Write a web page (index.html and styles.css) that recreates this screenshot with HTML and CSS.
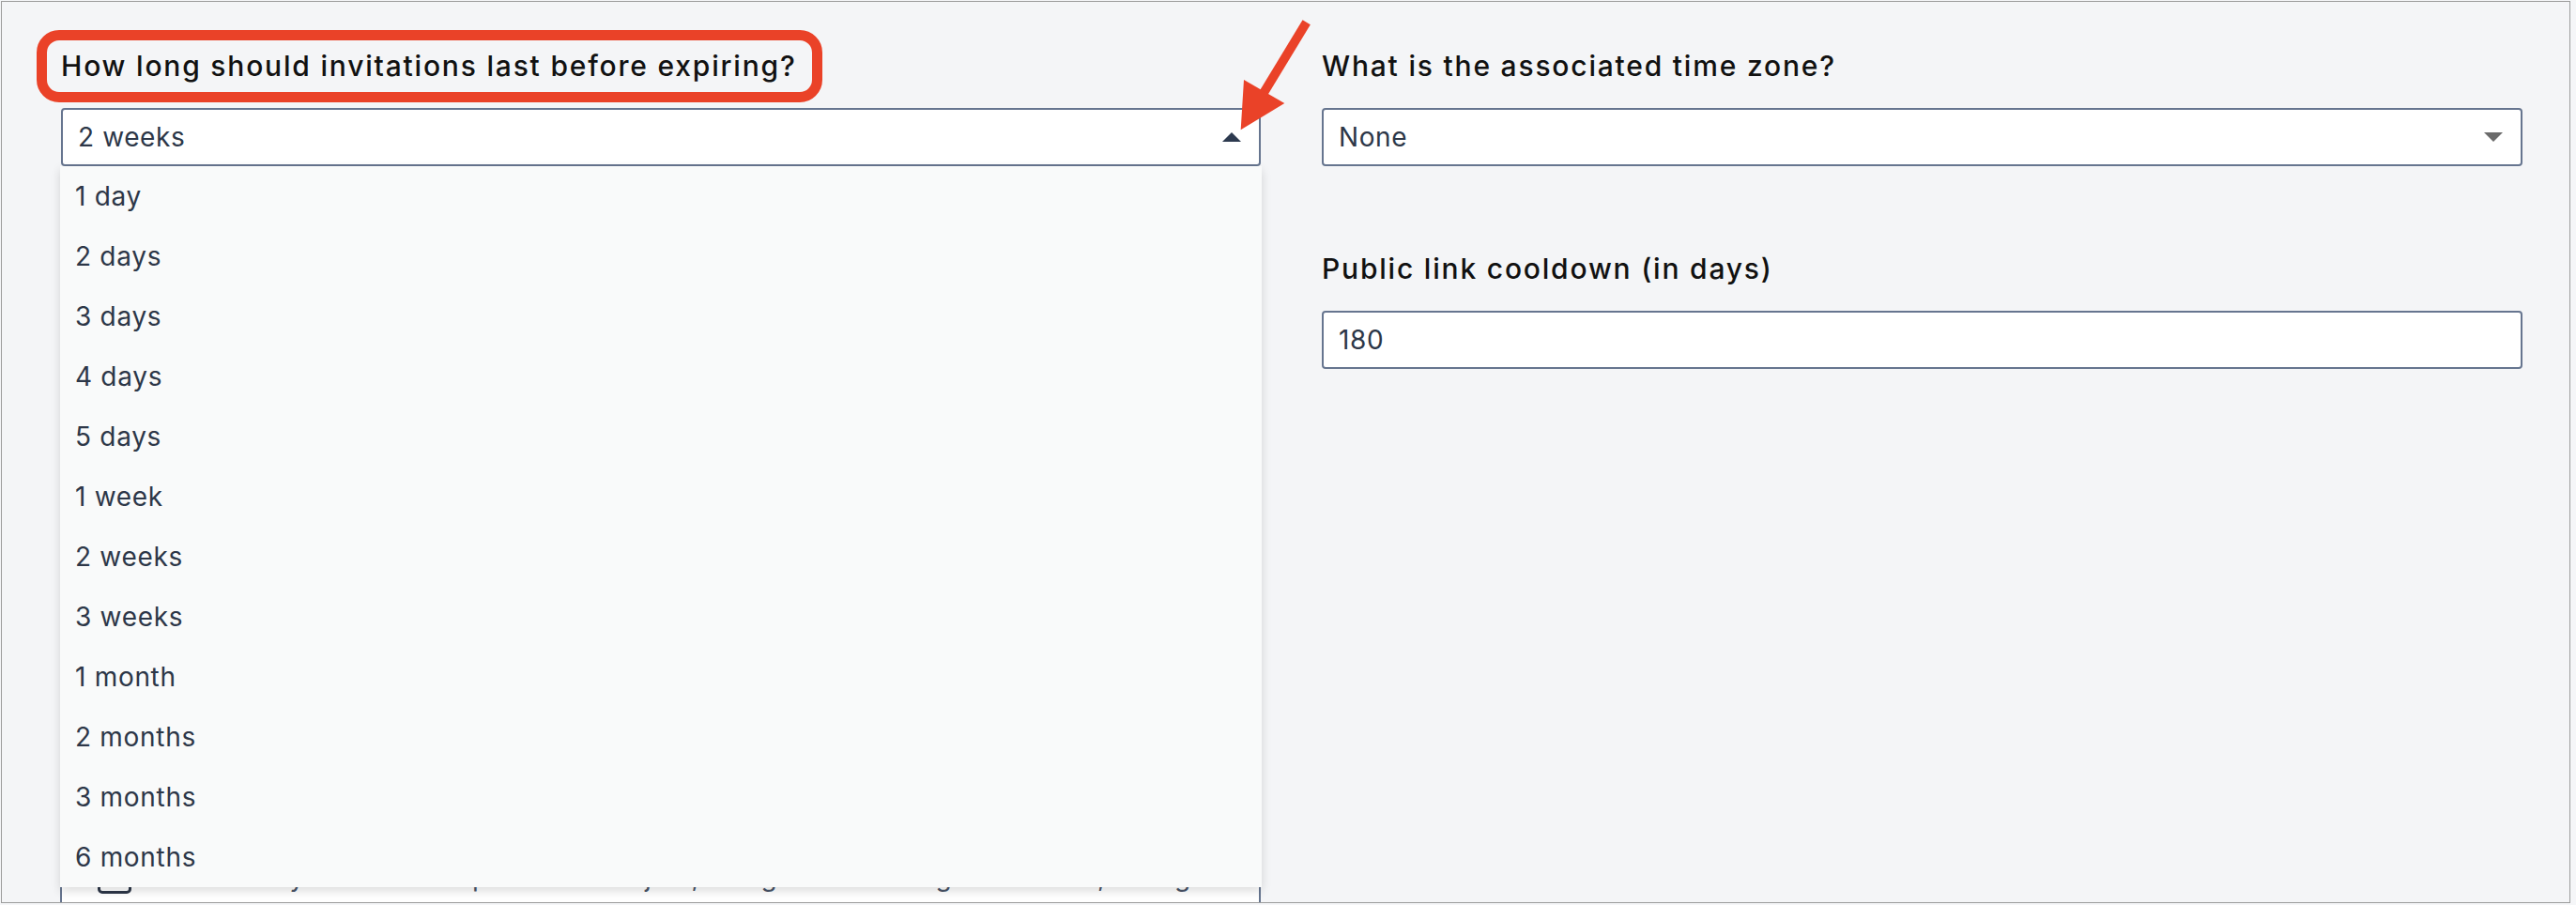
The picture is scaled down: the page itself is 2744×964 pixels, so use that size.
FILE: index.html
```html
<!DOCTYPE html>
<html lang="en">
<head>
<meta charset="utf-8">
<title>Invitation settings</title>
<link rel="stylesheet" href="styles.css">
</head>
<body>
<div class="frame">
  <div class="grid">
    <div class="col">
      <div class="field">
        <label class="label">How long should invitations last before expiring?</label>
        <div class="select-wrap">
          <div class="select">
            <span class="value">2 weeks</span>
            <span class="caret caret-up"></span>
          </div>
          <ul class="menu">
            <li class="item">1 day</li>
            <li class="item">2 days</li>
            <li class="item">3 days</li>
            <li class="item">4 days</li>
            <li class="item">5 days</li>
            <li class="item">1 week</li>
            <li class="item">2 weeks</li>
            <li class="item">3 weeks</li>
            <li class="item">1 month</li>
            <li class="item">2 months</li>
            <li class="item">3 months</li>
            <li class="item">6 months</li>
          </ul>
        </div>
      </div>
      <div class="option-box">
        <div class="option-row">
          <span class="checkbox"></span>
          <span class="option-text">Allow anyone with the public link to join, using their own sign-in details, as a guest</span>
        </div>
      </div>
    </div>
    <div class="col">
      <div class="field">
        <label class="label">What is the associated time zone?</label>
        <div class="select">
          <span class="value">None</span>
          <span class="caret caret-down"></span>
        </div>
      </div>
      <div class="field field-spaced">
        <label class="label">Public link cooldown (in days)</label>
        <div class="input"><span class="value">180</span></div>
      </div>
    </div>
  </div>
</div>
<div class="annot-box"></div>
<svg class="annot-arrow" width="2744" height="964" viewBox="0 0 2744 964">
  <line x1="1391.7" y1="23.8" x2="1343" y2="104" stroke="#ea4228" stroke-width="9.7"/>
  <polygon points="1321.7,138.3 1325,85 1368.3,110" fill="#ea4228"/>
</svg>
</body>
</html>
```

FILE: styles.css
```css
html, body {
  margin: 0;
  padding: 0;
}
body {
  background: #f5f6f8;
  font-family: Inter, "Noto Sans", "Liberation Sans", sans-serif;
  width: 2744px;
  height: 964px;
  overflow: hidden;
  position: relative;
}
.frame {
  box-sizing: border-box;
  margin: 1px 0 0 1px;
  width: 2737px;
  height: 961px;
  border: 1px solid #9c9c9c;
  background: #f4f5f7;
  padding: 50px 0 0 63px;
  overflow: hidden;
}
.grid {
  display: grid;
  grid-template-columns: 1278px 1279px;
  column-gap: 65px;
}
.col {
  display: flex;
  flex-direction: column;
}
.field {
  display: flex;
  flex-direction: column;
}
.field-spaced {
  margin-top: 91px;
}
.label {
  display: block;
  font-size: 30px;
  font-weight: 500;
  letter-spacing: 1.8px;
  line-height: 36px;
  color: #111111;
  margin-bottom: 27px;
  white-space: nowrap;
}
.select-wrap {
  position: relative;
}
.select, .input {
  box-sizing: border-box;
  height: 62px;
  border: 2px solid #66758f;
  border-radius: 4px;
  background: #ffffff;
  display: flex;
  align-items: center;
  justify-content: space-between;
  padding: 0 19px 0 16px;
}
.value {
  font-size: 28px;
  line-height: 34px;
  letter-spacing: 0.6px;
  color: #2d3748;
}
.caret {
  width: 0;
  height: 0;
  border-left: 10px solid transparent;
  border-right: 10px solid transparent;
}
.caret-up {
  border-bottom: 10px solid #2d3a4f;
}
.caret-down {
  border-top: 10px solid #6b6b6b;
}
.menu {
  position: absolute;
  top: 100%;
  left: -1px;
  width: calc(100% + 2px);
  margin: 0;
  padding: 0;
  list-style: none;
  background: #f9fafa;
  box-shadow: 0 4px 10px rgba(0, 0, 0, 0.14);
  z-index: 5;
}
.item {
  height: 64px;
  display: flex;
  align-items: center;
  padding-left: 16px;
  font-size: 28px;
  letter-spacing: 0.7px;
  color: #2d3748;
}
.option-box {
  box-sizing: border-box;
  margin: 673px 0 0 -1px;
  width: 1279px;
  height: 200px;
  border: 2px solid #66758f;
  border-radius: 4px;
  background: #ffffff;
  align-self: flex-start;
  padding: 64px 0 0 38px;
}
.option-row {
  display: flex;
  align-items: center;
}
.checkbox {
  box-sizing: border-box;
  flex: none;
  width: 36px;
  height: 36px;
  border: 3px solid #2d3748;
  border-radius: 5px;
}
.option-text {
  margin-left: 52px;
  font-size: 28px;
  line-height: 34px;
  letter-spacing: 0.6px;
  color: #4a5568;
  white-space: nowrap;
}
.annot-box {
  position: absolute;
  left: 39px;
  top: 32px;
  width: 837px;
  height: 77px;
  box-sizing: border-box;
  border: 11px solid #ea4228;
  border-radius: 24px;
}
.annot-arrow {
  position: absolute;
  left: 0;
  top: 0;
  pointer-events: none;
}
```
